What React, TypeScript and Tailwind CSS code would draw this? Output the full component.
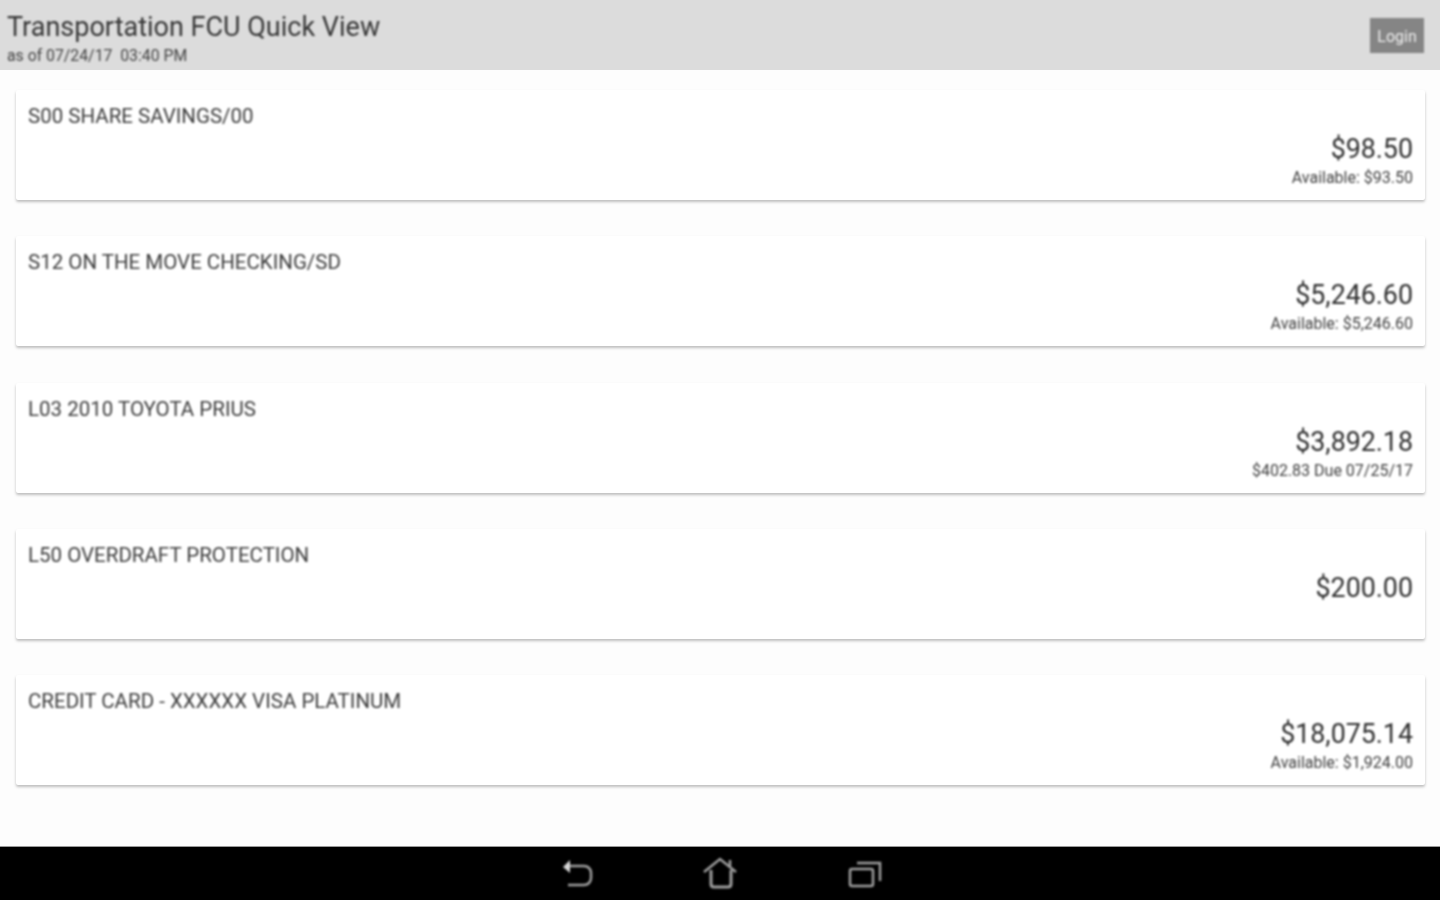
const rows = [
  { name: "S00 SHARE SAVINGS/00", amount: "$98.50", sub: "Available: $93.50" },
  { name: "S12 ON THE MOVE CHECKING/SD", amount: "$5,246.60", sub: "Available: $5,246.60" },
  { name: "L03 2010 TOYOTA PRIUS", amount: "$3,892.18", sub: "$402.83 Due 07/25/17" },
  { name: "L50 OVERDRAFT PROTECTION", amount: "$200.00", sub: "" },
  { name: "CREDIT CARD - XXXXXX VISA PLATINUM", amount: "$18,075.14", sub: "Available: $1,924.00" },
];

export default function App() {
  return (
    <div className="flex h-[900px] w-[1440px] flex-col overflow-hidden bg-[#fdfdfd] font-['Roboto',sans-serif]">
      <header className="flex h-[70px] shrink-0 items-start justify-between bg-[#dcdcdc] pl-[7px] pr-[16px]">
        <div className="blur-[0.8px]">
          <div className="mt-[10px] text-[27px] leading-[34px] text-[#363636]">Transportation FCU Quick View</div>
          <div className="mt-[2px] text-[15.8px] leading-[20px] text-[#444444]">as of 07/24/17&nbsp; 03:40 PM</div>
        </div>
        <button className="mt-[18px] h-[35px] w-[54px] bg-[#858585] pt-[2px] text-[16px] blur-[0.8px]">
          <span className="text-[#efefef]">Login</span>
        </button>
      </header>
      <main className="flex flex-1 flex-col gap-[36.25px] pl-[16px] pr-[15px] pt-[20px]">
        {rows.map((r) => (
          <div key={r.name} className="flex h-[110px] shrink-0 justify-between rounded-[2px] bg-white pl-[12px] pr-[12px] shadow-[0_2px_3px_rgba(0,0,0,0.25)]">
            <div className="mt-[14px] text-[20.5px] leading-[24px] text-[#3c3c3c] blur-[0.8px]">{r.name}</div>
            <div className="mt-[43px] text-right blur-[0.8px]">
              <div className="text-[26.8px] leading-[32px] text-[#2e2e2e]">{r.amount}</div>
              {r.sub && <div className="mt-[4px] text-[16px] leading-[18px] text-[#404040]">{r.sub}</div>}
            </div>
          </div>
        ))}
      </main>
      <footer className="flex h-[54px] shrink-0 items-center justify-center gap-[109px] border-t border-[#999999] bg-black pl-[4px] text-[#a0a0a0]">
        <svg width="32" height="30" viewBox="0 0 32 30" fill="none" className="blur-[0.8px]">
          <path d="M8 7H22C26 7 29 10 29 14V19C29 23 26 26 22 26H6" stroke="currentColor" strokeWidth="2.5" />
          <path d="M1 8L8 1V14Z" fill="#d8d8d8" />
        </svg>
        <svg width="34" height="34" viewBox="0 0 34 34" fill="none" className="mr-[2px] blur-[0.8px]">
          <path d="M1 15L17 2L33 15" stroke="currentColor" strokeWidth="2.5" />
          <path d="M8 13V27C8 29 9 30 11 30H25C27 30 28 29 28 27V13" stroke="currentColor" strokeWidth="3" />
          <path d="M27 3V9" stroke="currentColor" strokeWidth="2.5" />
        </svg>
        <svg width="34" height="28" viewBox="0 0 34 28" fill="none" className="blur-[0.8px]">
          <rect x="2" y="9" width="23" height="17" rx="2" stroke="currentColor" strokeWidth="2.5" />
          <path d="M9 3H32V21" stroke="currentColor" strokeWidth="2.5" />
        </svg>
      </footer>
    </div>
  );
}
